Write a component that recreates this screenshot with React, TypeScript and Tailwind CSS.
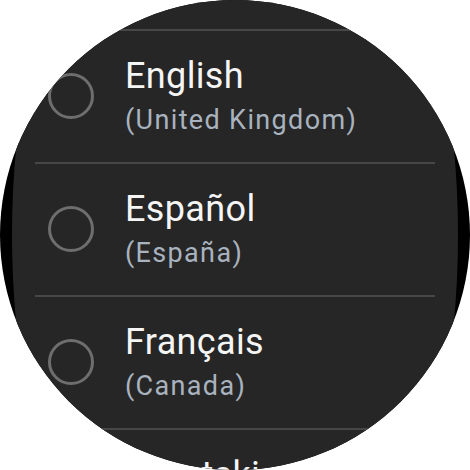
// Wear OS style language picker on a round watch face

type Language = { name: string; region: string };

const languages: Language[] = [
  { name: 'English', region: '(United Kingdom)' },
  { name: 'Español', region: '(España)' },
  { name: 'Français', region: '(Canada)' },
  { name: 'Hrvatski', region: '(Hrvatska)' },
];

function Radio() {
  return <div className="w-[46px] h-[46px] shrink-0 rounded-full border-[3px] border-[#6e6e6e]" />;
}

function LanguageRow({ lang }: { lang: Language }) {
  return (
    <div className="h-[131px] shrink-0 flex items-center pl-[13px]">
      <div className="-mt-[2px]">
        <Radio />
      </div>
      <div className="ml-[31px] flex flex-col">
        <span className="text-[36px] leading-[40px] tracking-[0.01em] text-[#f5f5f5] whitespace-nowrap">{lang.name}</span>
        <span className="mt-[7px] text-[27px] leading-[34px] tracking-[0.05em] text-[#a9b3bf] whitespace-nowrap">
          {lang.region}
        </span>
      </div>
    </div>
  );
}

export default function App() {
  return (
    <div className="w-[470px] h-[470px] bg-white" style={{ fontFamily: 'Roboto, "Noto Sans", sans-serif' }}>
      <div className="w-[470px] h-[470px] rounded-full bg-black overflow-hidden flex items-center justify-center">
        <div className="w-[446px] h-[912px] shrink-0 rounded-[50%] bg-[#262626] flex items-center justify-center">
          <div className="w-[400px] h-[470px] shrink-0 pt-[29px] flex flex-col">
            {languages.map((lang) => (
              <div key={lang.name} className="flex flex-col shrink-0">
                <div className="h-[2px] bg-[#474747]" />
                <LanguageRow lang={lang} />
              </div>
            ))}
          </div>
        </div>
      </div>
    </div>
  );
}
